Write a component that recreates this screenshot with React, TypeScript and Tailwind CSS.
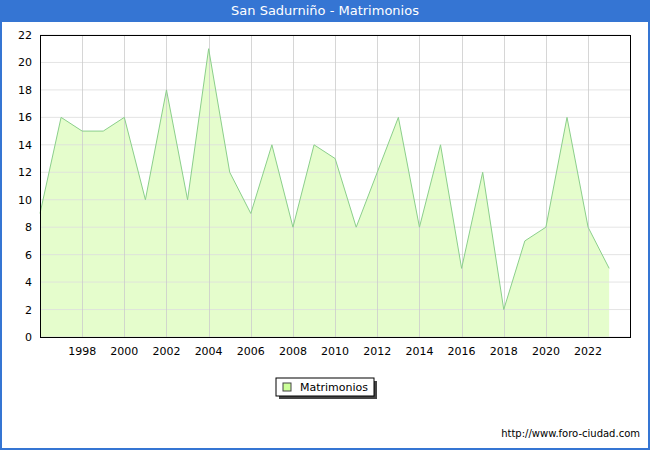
const data = [9,16,15,15,16,10,18,10,21,12,9,14,8,14,13,8,12,16,8,14,5,12,2,7,8,16,8,5];
const X0 = 40, X1 = 630, Y0 = 35, Y1 = 337;
const xs = (i: number) => X0 + i * 21.08;
const ys = (v: number) => Y1 - (v / 22) * (Y1 - Y0);

export default function App() {
  const pts = data.map((v, i) => `${xs(i)},${ys(v)}`).join(" ");
  const area = `${xs(0)},${Y1} ${pts} ${xs(data.length - 1)},${Y1}`;
  return (
    <div className="w-[650px] h-[450px] bg-[#3575d3] flex flex-col" style={{ fontFamily: '"DejaVu Sans", sans-serif' }}>
      <div className="h-[22px] flex items-center justify-center text-white text-[13px]">San Sadurniño - Matrimonios</div>
      <div className="flex-1 mx-[2px] mb-[2px] bg-white">
        <svg width="646" height="426" className="block" viewBox="2 22 646 426" fontFamily='"DejaVu Sans", sans-serif' fontSize="11">
          <polygon points={area} fill="#e5fdcc" />
          {Array.from({ length: 12 }, (_, k) => (
            <g key={k}>
              <line x1={X0} x2={X1} y1={ys(k * 2)} y2={ys(k * 2)} stroke="#dddddd" strokeOpacity="0.8" />
              <text x={X0 - 8} y={ys(k * 2) + 4} textAnchor="end" fill="#000">{k * 2}</text>
            </g>
          ))}
          {Array.from({ length: 13 }, (_, k) => (
            <g key={k}>
              <line x1={Math.round(xs(2 + 2 * k)) + 0.5} x2={Math.round(xs(2 + 2 * k)) + 0.5} y1={Y0} y2={Y1} stroke="#cccccc" strokeOpacity="0.8" />
              <text x={xs(2 + 2 * k)} y={Y1 + 18} textAnchor="middle" fill="#000">{1998 + 2 * k}</text>
            </g>
          ))}
          <polyline points={pts} fill="none" stroke="#8bcf8b" strokeWidth="1" />
          <rect x={X0 + 0.5} y={Y0 + 0.5} width={X1 - X0} height={Y1 - Y0} fill="none" stroke="#000" />
          <rect x="279" y="381" width="98" height="18" fill="#444" />
          <rect x="276" y="378" width="98" height="18" fill="#fff" stroke="#000" />
          <rect x="283" y="383" width="8" height="8" fill="#ccff99" stroke="#444" />
          <text x="300" y="391" fill="#000">Matrimonios</text>
          <text x="640" y="437" textAnchor="end" fontSize="10" fill="#000">http://www.foro-ciudad.com</text>
        </svg>
      </div>
    </div>
  );
}
